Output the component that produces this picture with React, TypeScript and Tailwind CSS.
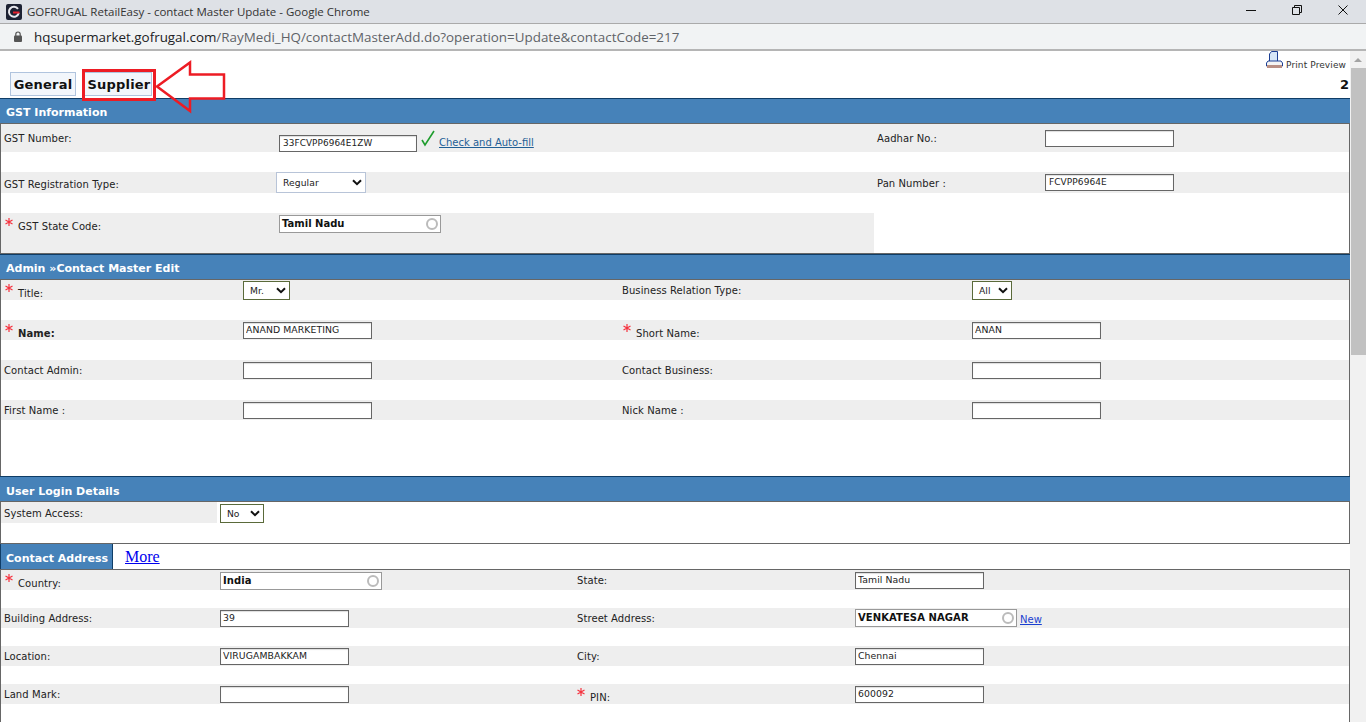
import React from 'react';

// red required mark
const Star = ({ mt }: { mt: string }) => (
  <svg className={`${mt} mr-[5px] shrink-0`} width="8" height="8" viewBox="0 0 8 8">
    <path d="M4 0v8M.5 2l7 4M.5 6l7-4" stroke="#f5333f" strokeWidth="1.2" fill="none" />
  </svg>
);

const Label = ({ text, bold, pl = 'pl-[3px]', gst }: { text: string; bold?: boolean; pl?: string; gst?: boolean }) => (
  <div className={`${pl} whitespace-nowrap flex items-start pt-[3px] ${bold ? 'font-bold' : 'tracking-[0.08px]'}`}>
    <Star mt={gst ? 'mt-[2px]' : 'mt-[1px]'} />
    <span className="mt-[3px]">{text}</span>
  </div>
);

const TextBox = ({ value, w = 'w-[129px]', pad = 'px-[2px]', size = 'text-[9.3px]' }: { value?: string; w?: string; pad?: string; size?: string }) => (
  <input
    readOnly
    value={value || ''}
    className={`block ${w} ${pad} ${size} h-[17px] border border-[#666] bg-white pb-[2px] text-[#222] outline-none shadow-[inset_0_1px_1px_#ddd]`}
  />
);

const Lookup = ({ value, w }: { value: string; w: string }) => (
  <div className={`${w} h-[18px] border border-[#999] bg-white flex items-center justify-between pl-[2px] pr-[2px] pb-[1px] font-bold text-[#111]`}>
    <span>{value}</span>
    <span className="w-[12px] h-[12px] mt-[1px] rounded-full border-2 border-[#bbb]" />
  </div>
);

const Select = ({ value, w, h = 'h-[19px]', border = 'border-[#5a6a3a]' }: { value: string; w: string; h?: string; border?: string }) => (
  <div className={`${w} ${h} border ${border} bg-white flex items-center justify-between pl-[6px] pr-[3px] text-[9.2px] text-[#222]`}>
    <span className="pt-[1px]">{value}</span>
    <svg width="10" height="7" viewBox="0 0 10 7"><path d="M1 1.2 5 5.2 9 1.2" fill="none" stroke="#111" strokeWidth="2" /></svg>
  </div>
);

const Header = ({ title, pt = 'pt-[4px]' }: { title: string; pt?: string }) => (
  <div className={`h-[26px] bg-[#4682b9] border-t border-[#0f3d66] border-b border-b-[#666] flex items-center pl-[6px] ${pt} text-[11px] font-bold text-white`}>
    {title}
  </div>
);

const Row = ({ cols, h, children }: { cols: string; h: string; children: React.ReactNode }) => (
  <div className={`grid ${cols} ${h} bg-[#eeeeee] tracking-[0.08px]`}>{children}</div>
);

const gstCols = 'grid-cols-[278px_598px_168px_1fr]';
const adminCols = 'grid-cols-[242px_379px_350px_1fr]';
const addrCols = 'grid-cols-[219px_357px_278px_1fr]';

export default function App() {
  return (
    <div className="w-[1366px] h-[722px] overflow-hidden bg-white relative font-['DejaVu_Sans',sans-serif] text-[10px] text-[#222]">
      {/* browser popup chrome */}
      <div className="h-[24px] bg-[#dee1e6] border-b border-[#aaa] flex items-center font-['Open_Sans',sans-serif] text-[11.5px] text-[#333]">
        <svg className="ml-[6px] mr-[5px]" width="16" height="16" viewBox="0 0 16 16">
          <rect width="16" height="16" rx="2" fill="#1d2233" />
          <path d="M12 4.800A5 5 0 1 0 12.800 9" fill="none" stroke="#e8e8ee" strokeWidth="2" />
          <path d="M7 8.500H13.500" stroke="#e8202c" strokeWidth="2" />
        </svg>
        <span className="pt-[1px]">GOFRUGAL RetailEasy - contact Master Update - Google Chrome</span>
        <div className="ml-auto flex items-center pb-[3px]">
          <div className="w-[10px] h-px bg-[#111] mr-[36px]" />
          <svg className="mr-[36px]" width="10" height="10" viewBox="0 0 10 10"><path d="M.5 2.500h7v7h-7zM2.500 2.500V.5h7v7h-2" fill="none" stroke="#111" /></svg>
          <svg className="mr-[18px]" width="10" height="10" viewBox="0 0 10 10"><path d="M.5.5l9 9M9.500.5l-9 9" fill="none" stroke="#111" /></svg>
        </div>
      </div>
      <div className="h-[27px] bg-[#f1f3f4] border-b-2 border-[#b5b5b5] flex items-center font-['Open_Sans',sans-serif] text-[13.4px]">
        <svg className="ml-[14px] mr-[12px]" width="8" height="11" viewBox="0 0 8 11">
          <path d="M1.800 5V3.200a2.200 2.200 0 0 1 4.400 0V5" fill="none" stroke="#555" strokeWidth="1.2" />
          <rect y="4.500" width="8" height="6.500" rx="1" fill="#555" />
        </svg>
        <span className="text-[#202124] pt-[1px]">hqsupermarket.gofrugal.com</span>
        <span className="text-[#5f6368] pt-[1px]">/RayMedi_HQ/contactMasterAdd.do?operation=Update&amp;contactCode=217</span>
      </div>

      <div className="flex h-[671px]">
        <div className="w-[1350px]">
          {/* tabs */}
          <div className="h-[47px] relative">
            <div className="absolute left-[10px] top-[21px] flex gap-[7px] text-[13px] font-bold text-[#111] tracking-[0.2px]">
              <div className="w-[66px] h-[24px] border border-[#b0c4de] bg-[#f2f6fb] flex items-center justify-center pt-[2px]">General</div>
              <div className="w-[69px] h-[24px] border border-[#b0c4de] bg-[#f2f6fb] flex items-center justify-center pt-[2px] pl-[3px]">Supplier</div>
            </div>
            <div className="absolute right-[4px] top-0 flex items-end text-[9px] text-[#333] tracking-[0.1px]">
              <svg className="mr-[3px]" width="17" height="18" viewBox="0 0 17 18">
                <path d="M3.500 10V3l2-2.500h6V10" fill="#d6e6f7" stroke="#1c3f94" />
                <path d="M.5 15V12L2 10h13l1.500 2v3z" fill="#f4f4f4" stroke="#1c3f94" />
                <rect x="1" y="14" width="15" height="3" fill="#b98f84" />
              </svg>
              <span className="mb-[-3px]">Print Preview</span>
            </div>
            <div className="absolute right-[1px] top-[24px] text-[13px] font-bold text-[#111]">2</div>
          </div>

          {/* GST */}
          <Header title="GST Information" />
          <div className="border-x border-[#666] border-b h-[130px]">
            <Row cols={gstCols} h="h-[28px]">
              <div className="pl-[3px] pt-[7px]">GST Number:</div>
              <div className="flex items-start pt-[11px]">
                <TextBox value="33FCVPP6964E1ZW" w="w-[138px]" pad="px-[3px]" size="text-[8.9px]" />
                <svg className="ml-[4px] -mt-[5px]" width="14" height="17" viewBox="0 0 14 17"><path d="M1 10l3 5L13 1" fill="none" stroke="#1f9d2e" strokeWidth="1.6" /></svg>
                <span className="ml-[4px] underline text-[#1f5f96] tracking-normal">Check and Auto-fill</span>
              </div>
              <div className="pt-[7px]">Aadhar No.:</div>
              <div className="pt-[6px]"><TextBox /></div>
            </Row>
            <div className="h-[20px]" />
            <Row cols={gstCols} h="h-[21px]">
              <div className="pl-[3px] pt-[5px]">GST Registration Type:</div>
              <div className="-ml-[3px]"><Select value="Regular" w="w-[90px]" h="h-[21px]" border="border-[#b8c4d8]" /></div>
              <div className="pt-[4px]">Pan Number :</div>
              <div className="pt-[2px]"><TextBox value="FCVPP6964E" pad="px-[3px]" size="text-[9px]" /></div>
            </Row>
            <div className="h-[20px]" />
            <div className="flex h-[40px]">
              <div className="w-[873px] bg-[#eeeeee] flex">
                <div className="w-[278px]"><Label text="GST State Code:" pl="pl-[4px]" gst /></div>
                <div className="pt-[2px]"><Lookup value="Tamil Nadu" w="w-[162px]" /></div>
              </div>
            </div>
          </div>

          {/* Admin */}
          <Header title="Admin »Contact Master Edit" />
          <div className="border-x border-[#666] h-[196px]">
            <Row cols={adminCols} h="h-[20px]">
              <Label text="Title:" pl="pl-[4px]" />
              <div className="pt-[1px]"><Select value="Mr." w="w-[47px]" /></div>
              <div className="pt-[3px]">Business Relation Type:</div>
              <div className="pt-[1px]"><Select value="All" w="w-[40px]" /></div>
            </Row>
            <div className="h-[20px]" />
            <Row cols={adminCols} h="h-[20px]">
              <Label text="Name:" bold pl="pl-[4px]" />
              <div className="pt-[2px]"><TextBox value="ANAND MARKETING" /></div>
              <Label text="Short Name:" pl="pl-[1px]" />
              <div className="pt-[2px]"><TextBox value="ANAN" /></div>
            </Row>
            <div className="h-[20px]" />
            <Row cols={adminCols} h="h-[20px]">
              <div className="pl-[3px] pt-[3px]">Contact Admin:</div>
              <div className="pt-[2px]"><TextBox /></div>
              <div className="pt-[3px]">Contact Business:</div>
              <div className="pt-[2px]"><TextBox /></div>
            </Row>
            <div className="h-[20px]" />
            <Row cols={adminCols} h="h-[20px]">
              <div className="pl-[3px] pt-[3px]">First Name :</div>
              <div className="pt-[2px]"><TextBox /></div>
              <div className="pt-[3px]">Nick Name :</div>
              <div className="pt-[2px]"><TextBox /></div>
            </Row>
          </div>

          {/* Login */}
          <Header title="User Login Details" pt="pt-[6px]" />
          <div className="border-x border-b border-[#666] h-[42px]">
            <div className="flex h-[21px]">
              <div className="w-[216px] bg-[#eeeeee] pl-[3px] pt-[4px] tracking-[0.08px]">System Access:</div>
              <div className="ml-[3px] pt-[2px]"><Select value="No" w="w-[44px]" /></div>
            </div>
          </div>

          {/* Address */}
          <div className="h-[26px] flex border-b border-[#666]">
            <div className="w-[113px] bg-[#4682b9] border-l border-r border-[#0f3d66] flex items-center pl-[5px] pt-[6px] text-[11px] font-bold text-white">Contact Address</div>
            <a className="ml-[12px] mt-[3px] text-[16px] leading-[20px] text-[#00e] underline font-['Liberation_Serif',serif]">More</a>
          </div>
          <div className="border-x border-[#666] h-[152px]">
            <Row cols={addrCols} h="h-[20px]">
              <Label text="Country:" pl="pl-[4px]" />
              <div className="pt-[2px]"><Lookup value="India" w="w-[162px]" /></div>
              <div className="pt-[3px]">State:</div>
              <div className="pt-[2px]"><TextBox value="Tamil Nadu" /></div>
            </Row>
            <div className="h-[18px]" />
            <Row cols={addrCols} h="h-[20px]">
              <div className="pl-[3px] pt-[3px]">Building Address:</div>
              <div className="pt-[2px]"><TextBox value="39" /></div>
              <div className="pt-[3px]">Street Address:</div>
              <div className="pt-[1px] flex items-start">
                <Lookup value="VENKATESA NAGAR" w="w-[162px]" />
                <span className="ml-[3px] mt-[3px] underline text-[#1a3fd0] tracking-normal">New</span>
              </div>
            </Row>
            <div className="h-[18px]" />
            <Row cols={addrCols} h="h-[20px]">
              <div className="pl-[3px] pt-[3px]">Location:</div>
              <div className="pt-[2px]"><TextBox value="VIRUGAMBAKKAM" /></div>
              <div className="pt-[3px]">City:</div>
              <div className="pt-[2px]"><TextBox value="Chennai" /></div>
            </Row>
            <div className="h-[18px]" />
            <Row cols={addrCols} h="h-[20px]">
              <div className="pl-[3px] pt-[3px]">Land Mark:</div>
              <div className="pt-[2px]"><TextBox /></div>
              <Label text="PIN:" pl="pl-0" />
              <div className="pt-[2px]"><TextBox value="600092" /></div>
            </Row>
          </div>
        </div>

        {/* scrollbar */}
        <div className="w-[16px] bg-[#f1f1f1] flex flex-col items-center pt-[7px]">
          <div className="w-0 h-0 border-x-[4px] border-x-transparent border-b-[4px] border-b-[#a3a3a3]" />
          <div className="mt-[6px] w-[15px] h-[287px] bg-[#c1c1c1]" />
        </div>
      </div>

      {/* annotation over the tabs */}
      <div className="absolute left-[82px] top-[69px] w-[74px] h-[32px] border-[3px] border-[#ed1c24]" />
      <svg className="absolute left-[150px] top-[55px]" width="80" height="62" viewBox="0 0 80 62">
        <path d="M7 31.500 40 7.500V19.500H74V43.500H40V56Z" fill="none" stroke="#ed1c24" strokeWidth="2.500" />
      </svg>
    </div>
  );
}
